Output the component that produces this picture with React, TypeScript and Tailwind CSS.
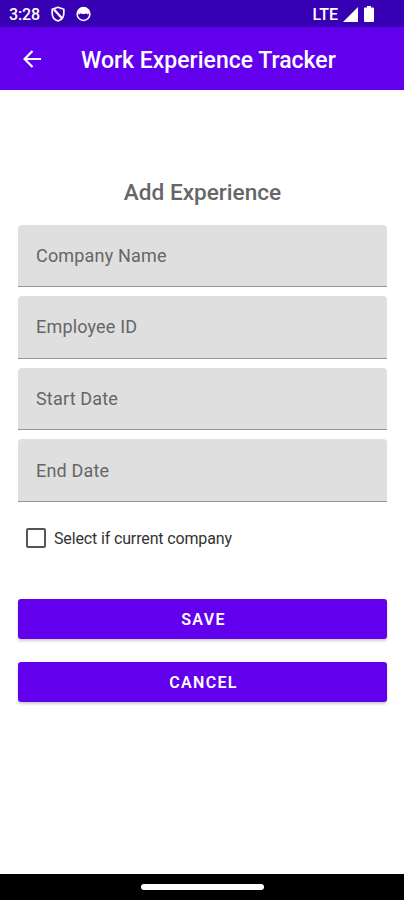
const fields = [
  { label: 'Company Name', name: 'company' },
  { label: 'Employee ID', name: 'employeeId' },
  { label: 'Start Date', name: 'startDate' },
  { label: 'End Date', name: 'endDate' },
]

function StatusBar() {
  return (
    <div className="flex h-[27px] shrink-0 items-center bg-[#3700b3] pl-[9px] pr-[30px] pt-px text-white">
      <span className="w-[42px] pt-px text-[16px] font-medium leading-none tracking-[-0.1px]">3:28</span>
      <svg className="h-[16px] w-[14px]" viewBox="0 0 14 16" fill="none" stroke="currentColor" strokeWidth="1.7">
        <path d="M7 1.2 12.8 3.2V7.5C12.8 11 10.5 13.8 7 15 3.5 13.8 1.2 11 1.2 7.5V3.2Z" strokeLinejoin="round" />
        <path d="M3 3.5 11 12.2" strokeWidth="2.2" />
      </svg>
      <svg className="ml-[11px] h-[16px] w-[15px]" viewBox="0 0 15 16" fill="none" stroke="currentColor" strokeWidth="1.5">
        <circle cx="7.5" cy="8" r="6.4" />
        <path d="M1.5 5.5 4 2.5 7.5 1.4 11 2.5 13.5 5.5 12.5 8.2H11L10.2 7 9.2 8H5.8L4.8 7 4 8.2H2.5Z" fill="currentColor" stroke="none" />
      </svg>
      <span className="ml-auto pt-px text-[16px] font-medium leading-none">LTE</span>
      <svg className="ml-[5px] h-[15px] w-[15px]" viewBox="0 0 15 15" fill="currentColor">
        <path d="M15 0V15H0Z" />
      </svg>
      <svg className="ml-[6px] h-[16px] w-[10px]" viewBox="0 0 10 16" fill="currentColor">
        <path d="M3 0h4v1.5h2a1 1 0 0 1 1 1V15a1 1 0 0 1-1 1H1a1 1 0 0 1-1-1V2.5a1 1 0 0 1 1-1h2Z" />
      </svg>
    </div>
  )
}

function Field({ label, name }: { label: string; name: string }) {
  return (
    <div
      data-field={name}
      className="flex h-[62.8px] items-center rounded-t-[4px] border-b border-[#959595] bg-[#dfdfdf] pl-[18px] text-[18px] tracking-[0.18px] text-[#666666]"
    >
      {label}
    </div>
  )
}

function Button({ children }: { children: string }) {
  return (
    <button className="h-[40px] w-full rounded-[3px] bg-[#6200ee] pl-[2px] pt-[2px] text-[16px] font-semibold leading-none tracking-[1.3px] text-white shadow-[0_2px_3px_rgba(0,0,0,0.2)]">
      {children}
    </button>
  )
}

export default function App() {
  return (
    <div className="flex h-[900px] w-[404px] flex-col overflow-hidden bg-white font-['Roboto',sans-serif]">
      <StatusBar />
      <header className="flex h-[63px] shrink-0 items-center bg-[#6200ee] pl-[23px] text-white">
        <svg className="h-[18px] w-[18px]" viewBox="0 0 18 18" fill="none" stroke="currentColor" strokeWidth="2.2">
          <path d="M18 9H2M9.5 1 1.6 9l7.9 8" />
        </svg>
        <h1 className="ml-[40px] whitespace-nowrap pt-[4px] text-[23px] font-medium leading-none">Work Experience Tracker</h1>
      </header>

      <main className="flex flex-1 flex-col pl-[18px] pr-[17px] pt-[89px]">
        <h2 className="text-center text-[22.6px] font-medium leading-[28px] text-[#666666]">Add Experience</h2>
        <form className="mt-[17.5px] flex flex-col gap-[8.8px]">
          {fields.map((field) => (
            <Field key={field.name} label={field.label} name={field.name} />
          ))}
        </form>

        <label className="mt-[26px] flex h-[20px] items-center pl-[8px]">
          <span className="h-[20px] w-[20px] rounded-[2px] border-2 border-[#555555]" />
          <span className="ml-[8px] pt-[2px] text-[16px] leading-none tracking-[-0.14px] text-[#333333]">Select if current company</span>
        </label>

        <div className="mt-[51px] flex flex-col gap-[23px]">
          <Button>SAVE</Button>
          <Button>CANCEL</Button>
        </div>
      </main>

      <footer className="flex h-[26px] shrink-0 justify-center bg-black pt-[10px]">
        <div className="h-[6px] w-[123px] rounded-full bg-white" />
      </footer>
    </div>
  )
}
